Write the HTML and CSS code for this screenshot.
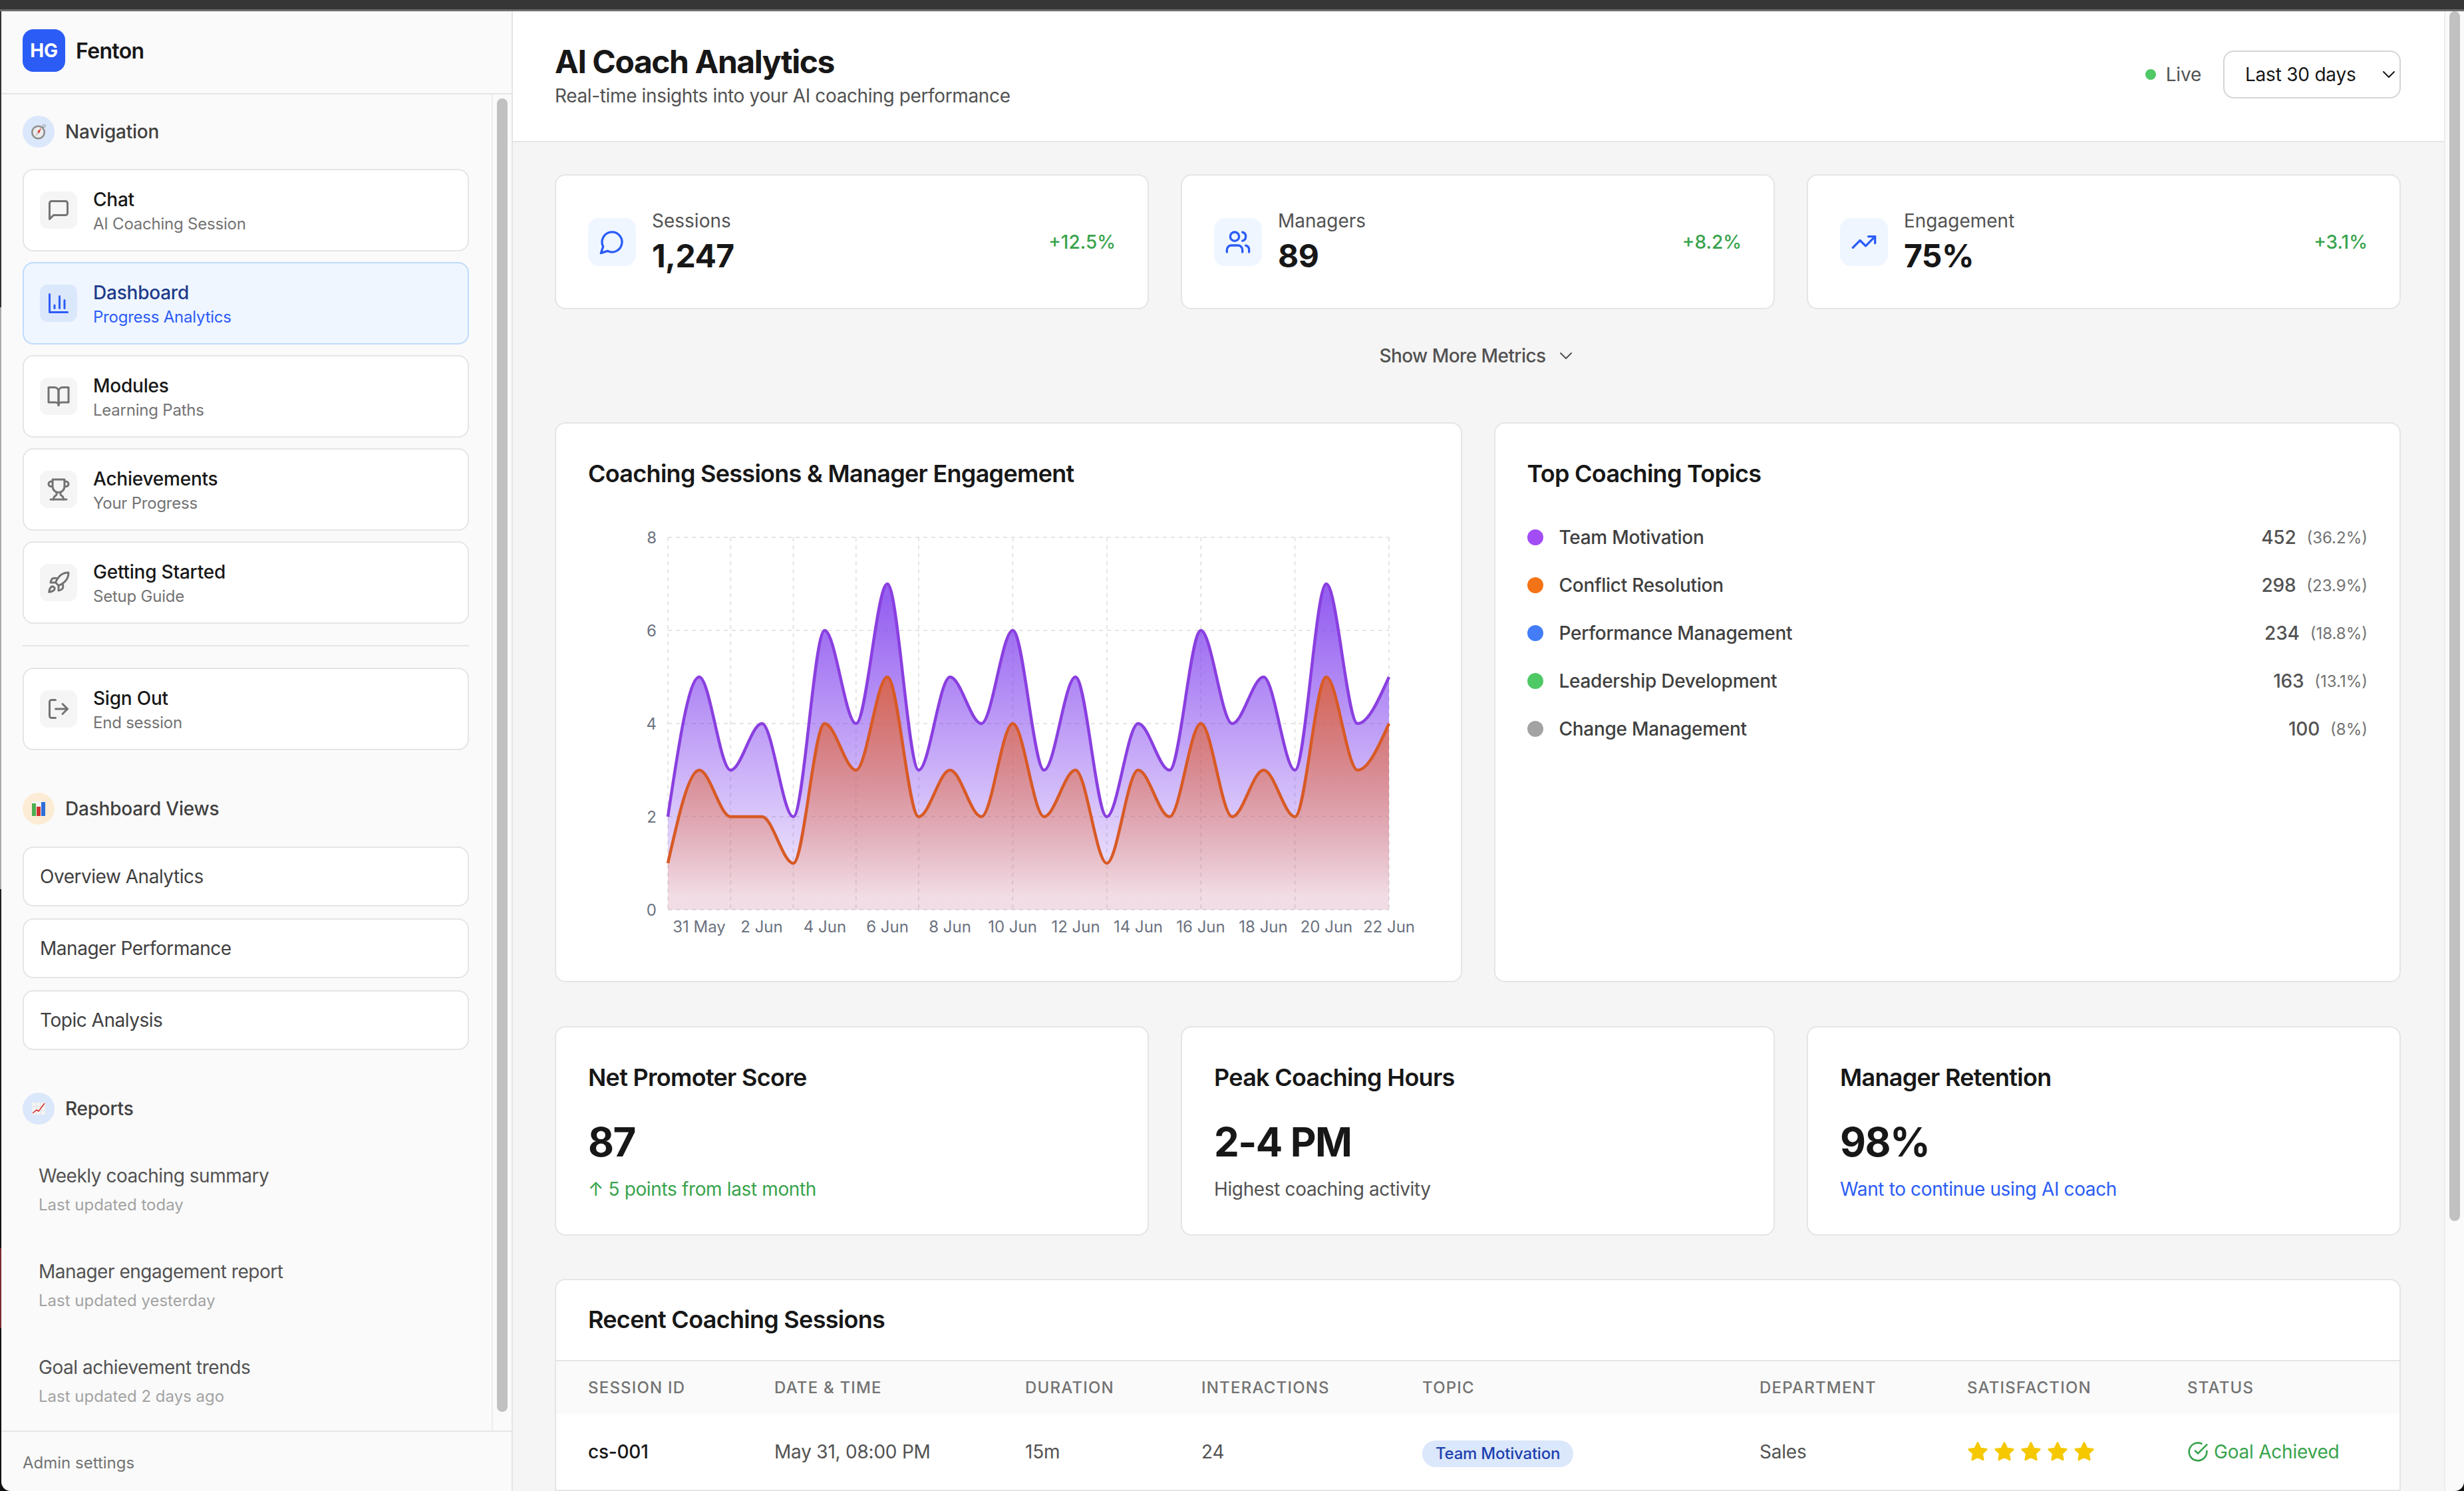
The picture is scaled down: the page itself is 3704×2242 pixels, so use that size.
FILE: index.html
```html
<!DOCTYPE html>
<html lang="en">
  <head>
    <meta charset="UTF-8" />
    <meta name="viewport" content="width=device-width, initial-scale=1.0" />
    <title>AI Coach Analytics</title>
    <link rel="stylesheet" href="styles.css">
  </head>
  <body>
    <svg class="icon-defs">
      <symbol id="i-message-square" viewBox="0 0 24 24"><path d="M21 15a2 2 0 0 1-2 2H7l-4 4V5a2 2 0 0 1 2-2h14a2 2 0 0 1 2 2z" /></symbol>
      <symbol id="i-bar-chart" viewBox="0 0 24 24"><path d="M3 3v18h18" /><path d="M18 17V9" /><path d="M13 17V5" /><path d="M8 17v-3" /></symbol>
      <symbol id="i-book" viewBox="0 0 24 24"><path d="M2 3h6a4 4 0 0 1 4 4v14a3 3 0 0 0-3-3H2z" /><path d="M22 3h-6a4 4 0 0 0-4 4v14a3 3 0 0 1 3-3h7z" /></symbol>
      <symbol id="i-trophy" viewBox="0 0 24 24"><path d="M6 9H4.5a2.5 2.5 0 0 1 0-5H6" /><path d="M18 9h1.5a2.5 2.5 0 0 0 0-5H18" /><path d="M4 22h16" /><path d="M10 14.66V17c0 .55-.47.98-.97 1.21C7.85 18.75 7 20.24 7 22" /><path d="M14 14.66V17c0 .55.47.98.97 1.21C16.15 18.75 17 20.24 17 22" /><path d="M18 2H6v7a6 6 0 0 0 12 0V2Z" /></symbol>
      <symbol id="i-rocket" viewBox="0 0 24 24"><path d="M4.5 16.5c-1.5 1.26-2 5-2 5s3.74-.5 5-2c.71-.84.7-2.13-.09-2.91a2.18 2.18 0 0 0-2.91-.09z" /><path d="m12 15-3-3a22 22 0 0 1 2-3.95A12.88 12.88 0 0 1 22 2c0 2.72-.78 7.5-6 11a22.35 22.35 0 0 1-4 2z" /><path d="M9 12H4s.55-3.03 2-4c1.62-1.08 5 0 5 0" /><path d="M12 15v5s3.03-.55 4-2c1.08-1.62 0-5 0-5" /></symbol>
      <symbol id="i-log-out" viewBox="0 0 24 24"><path d="M9 21H5a2 2 0 0 1-2-2V5a2 2 0 0 1 2-2h4" /><path d="m16 17 5-5-5-5" /><path d="M21 12H9" /></symbol>
      <symbol id="i-message-circle" viewBox="0 0 24 24"><path d="M7.9 20A9 9 0 1 0 4 16.1L2 22Z" /></symbol>
      <symbol id="i-users" viewBox="0 0 24 24"><path d="M16 21v-2a4 4 0 0 0-4-4H6a4 4 0 0 0-4 4v2" /><circle cx="9" cy="7" r="4" /><path d="M22 21v-2a4 4 0 0 0-3-3.87" /><path d="M16 3.13a4 4 0 0 1 0 7.75" /></symbol>
      <symbol id="i-trending-up" viewBox="0 0 24 24"><path d="m22 7-8.5 8.5-5-5L2 17" /><path d="M16 7h6v6" /></symbol>
      <symbol id="i-chevron-down" viewBox="0 0 24 24"><path d="m6 9 6 6 6-6" /></symbol>
      <symbol id="i-check-circle" viewBox="0 0 24 24"><path d="M22 11.08V12a10 10 0 1 1-5.93-9.14" /><path d="m9 11 3 3L22 4" /></symbol>
      <symbol id="i-star" viewBox="0 0 24 24"><path d="M12 2l3.09 6.26L22 9.27l-5 4.87 1.18 6.88L12 17.77l-6.18 3.25L7 14.14 2 9.27l6.91-1.01z" /></symbol>
    </svg>

    <div class="titlebar"></div>
    <div class="app">
      <div class="desk-edge"></div>

      <aside class="sidebar">
        <div class="brand">
          <div class="brand-logo">HG</div>
          <span class="brand-name">Fenton</span>
        </div>

        <div class="sidebar-body">
          <nav class="sidebar-nav">
            <div class="section-head">
              <span class="section-badge badge-blue">
                <svg class="emoji" viewBox="0 0 24 24">
                  <circle cx="11.5" cy="13" r="10.5" fill="#8c8c8c" />
                  <circle cx="11.5" cy="13" r="8" fill="#ececec" />
                  <circle cx="20" cy="3.5" r="2" fill="none" stroke="#9a9a9a" stroke-width="1.2" />
                  <path d="M16 6.5 10 12l3 2.5z" fill="#e0352b" />
                  <path d="M7 19.5 10 12l3 2.5z" fill="#c9c9c9" />
                </svg>
              </span>
              <span class="section-title">Navigation</span>
            </div>

            <div class="nav-list">
              <a class="nav-card">
                <span class="nav-icon"><svg class="icon"><use href="#i-message-square" /></svg></span>
                <span class="nav-text"><span class="nav-title">Chat</span><span class="nav-sub">AI Coaching Session</span></span>
              </a>
              <a class="nav-card active">
                <span class="nav-icon"><svg class="icon"><use href="#i-bar-chart" /></svg></span>
                <span class="nav-text"><span class="nav-title">Dashboard</span><span class="nav-sub">Progress Analytics</span></span>
              </a>
              <a class="nav-card">
                <span class="nav-icon"><svg class="icon"><use href="#i-book" /></svg></span>
                <span class="nav-text"><span class="nav-title">Modules</span><span class="nav-sub">Learning Paths</span></span>
              </a>
              <a class="nav-card">
                <span class="nav-icon"><svg class="icon"><use href="#i-trophy" /></svg></span>
                <span class="nav-text"><span class="nav-title">Achievements</span><span class="nav-sub">Your Progress</span></span>
              </a>
              <a class="nav-card">
                <span class="nav-icon"><svg class="icon"><use href="#i-rocket" /></svg></span>
                <span class="nav-text"><span class="nav-title">Getting Started</span><span class="nav-sub">Setup Guide</span></span>
              </a>
            </div>

            <hr class="nav-divider" />

            <a class="nav-card">
              <span class="nav-icon"><svg class="icon"><use href="#i-log-out" /></svg></span>
              <span class="nav-text"><span class="nav-title">Sign Out</span><span class="nav-sub">End session</span></span>
            </a>

            <div class="section-head section-spaced">
              <span class="section-badge badge-orange">
                <svg class="emoji emoji-small" viewBox="0 0 20 22">
                  <rect width="20" height="22" fill="#f4f4f4" />
                  <rect y="3" width="6" height="19" fill="#4caf50" />
                  <rect x="7" y="8" width="6" height="14" fill="#d32f2f" />
                  <rect x="14" y="1" width="6" height="21" fill="#2f6fd8" />
                </svg>
              </span>
              <span class="section-title">Dashboard Views</span>
            </div>
            <div class="view-list">
              <a class="view-item">Overview Analytics</a>
              <a class="view-item">Manager Performance</a>
              <a class="view-item">Topic Analysis</a>
            </div>

            <div class="section-head section-spaced">
              <span class="section-badge badge-blue">
                <svg class="emoji emoji-small" viewBox="0 0 20 22">
                  <rect y="2" width="20" height="18" fill="#f4f4f4" />
                  <path d="M0 8h20M0 14h20M7 2v18M13 2v18" stroke="#dcdcdc" stroke-width="0.8" />
                  <path d="M1 18 7 13l3 2 9-12" fill="none" stroke="#d32f2f" stroke-width="1.6" />
                </svg>
              </span>
              <span class="section-title">Reports</span>
            </div>
            <div class="report-list">
              <a class="report-item"><span class="report-title">Weekly coaching summary</span><span class="report-sub">Last updated today</span></a>
              <a class="report-item"><span class="report-title">Manager engagement report</span><span class="report-sub">Last updated yesterday</span></a>
              <a class="report-item"><span class="report-title">Goal achievement trends</span><span class="report-sub">Last updated 2 days ago</span></a>
            </div>
          </nav>
          <div class="scroll-track sidebar-track"><div class="scroll-thumb"></div></div>
        </div>

        <div class="sidebar-footer">Admin settings</div>
      </aside>

      <main class="main">
        <header class="main-header">
          <div>
            <h1 class="page-title">AI Coach Analytics</h1>
            <p class="page-sub">Real-time insights into your AI coaching performance</p>
          </div>
          <div class="header-actions">
            <span class="live"><span class="live-dot"></span>Live</span>
            <div class="range-select">
              <span>Last 30 days</span>
              <svg class="icon chevron"><use href="#i-chevron-down" /></svg>
            </div>
          </div>
        </header>

        <div class="content">
          <section class="grid-3">
            <div class="card stat-card">
              <span class="stat-icon"><svg class="icon"><use href="#i-message-circle" /></svg></span>
              <div class="stat-text"><div class="stat-label">Sessions</div><div class="stat-value">1,247</div></div>
              <span class="stat-change">+12.5%</span>
            </div>
            <div class="card stat-card">
              <span class="stat-icon"><svg class="icon"><use href="#i-users" /></svg></span>
              <div class="stat-text"><div class="stat-label">Managers</div><div class="stat-value">89</div></div>
              <span class="stat-change">+8.2%</span>
            </div>
            <div class="card stat-card">
              <span class="stat-icon"><svg class="icon"><use href="#i-trending-up" /></svg></span>
              <div class="stat-text"><div class="stat-label">Engagement</div><div class="stat-value">75%</div></div>
              <span class="stat-change">+3.1%</span>
            </div>
          </section>

          <div class="show-more">
            <span>Show More Metrics</span>
            <svg class="icon chevron"><use href="#i-chevron-down" /></svg>
          </div>

          <section class="grid-2">
            <div class="card panel">
              <h2 class="card-title">Coaching Sessions &amp; Manager Engagement</h2>
              <svg class="chart" width="1260" height="658" viewBox="0 0 1260 658">
                <defs>
                  <linearGradient id="fill-purple" x1="0" y1="0" x2="0" y2="1">
                    <stop offset="5%" stop-color="#7c3aed" stop-opacity="0.8" />
                    <stop offset="95%" stop-color="#7c3aed" stop-opacity="0.1" />
                  </linearGradient>
                  <linearGradient id="fill-orange" x1="0" y1="0" x2="0" y2="1">
                    <stop offset="5%" stop-color="#ea580c" stop-opacity="0.65" />
                    <stop offset="95%" stop-color="#ea580c" stop-opacity="0.1" />
                  </linearGradient>
                </defs>
                <!-- plot area: 3 units per day across, 1 unit per session down -->
                <svg class="plot" x="120" y="39" width="1084" height="560" viewBox="0 0 69 8" preserveAspectRatio="none">
                  <path class="grid-line" d="M0 0H69M0 2H69M0 4H69M0 6H69M0 8H69M0 0V8M6 0V8M12 0V8M18 0V8M24 0V8M33 0V8M42 0V8M51 0V8M60 0V8M69 0V8" />
                  <path fill="url(#fill-purple)" d="M0 6C1 4.5 2 3 3 3S5 5 6 5S8 4 9 4S11 6 12 6S14 2 15 2S17 4 18 4S20 1 21 1S23 5 24 5S26 3 27 3S29 4 30 4S32 2 33 2S35 5 36 5S38 3 39 3S41 6 42 6S44 4 45 4S47 5 48 5S50 2 51 2S53 4 54 4S56 3 57 3S59 5 60 5S62 1 63 1S65 4 66 4S68 3.5 69 3V8H0Z" />
                  <path class="line line-purple" d="M0 6C1 4.5 2 3 3 3S5 5 6 5S8 4 9 4S11 6 12 6S14 2 15 2S17 4 18 4S20 1 21 1S23 5 24 5S26 3 27 3S29 4 30 4S32 2 33 2S35 5 36 5S38 3 39 3S41 6 42 6S44 4 45 4S47 5 48 5S50 2 51 2S53 4 54 4S56 3 57 3S59 5 60 5S62 1 63 1S65 4 66 4S68 3.5 69 3" />
                  <path fill="url(#fill-orange)" d="M0 7C1 6 2 5 3 5S5 6 6 6S8 6 9 6S11 7 12 7S14 4 15 4S17 5 18 5S20 3 21 3S23 6 24 6S26 5 27 5S29 6 30 6S32 4 33 4S35 6 36 6S38 5 39 5S41 7 42 7S44 5 45 5S47 6 48 6S50 4 51 4S53 6 54 6S56 5 57 5S59 6 60 6S62 3 63 3S65 5 66 5S68 4.5 69 4V8H0Z" />
                  <path class="line line-orange" d="M0 7C1 6 2 5 3 5S5 6 6 6S8 6 9 6S11 7 12 7S14 4 15 4S17 5 18 5S20 3 21 3S23 6 24 6S26 5 27 5S29 6 30 6S32 4 33 4S35 6 36 6S38 5 39 5S41 7 42 7S44 5 45 5S47 6 48 6S50 4 51 4S53 6 54 6S56 5 57 5S59 6 60 6S62 3 63 3S65 5 66 5S68 4.5 69 4" />
                </svg>
                <g class="axis axis-y">
                  <text x="103" y="39">8</text>
                  <text x="103" y="179">6</text>
                  <text x="103" y="319">4</text>
                  <text x="103" y="459">2</text>
                  <text x="103" y="599">0</text>
                </g>
                <g class="axis axis-x">
                  <text x="167" y="624">31 May</text>
                  <text x="261" y="624">2 Jun</text>
                  <text x="356" y="624">4 Jun</text>
                  <text x="450" y="624">6 Jun</text>
                  <text x="544" y="624">8 Jun</text>
                  <text x="638" y="624">10 Jun</text>
                  <text x="733" y="624">12 Jun</text>
                  <text x="827" y="624">14 Jun</text>
                  <text x="921" y="624">16 Jun</text>
                  <text x="1015" y="624">18 Jun</text>
                  <text x="1110" y="624">20 Jun</text>
                  <text x="1204" y="624">22 Jun</text>
                </g>
              </svg>
            </div>

            <div class="card panel">
              <h2 class="card-title">Top Coaching Topics</h2>
              <ul class="topic-list">
                <li class="topic-row"><span class="dot dot-purple"></span><span class="topic-name">Team Motivation</span><span class="topic-count">452</span><span class="topic-pct">(36.2%)</span></li>
                <li class="topic-row"><span class="dot dot-orange"></span><span class="topic-name">Conflict Resolution</span><span class="topic-count">298</span><span class="topic-pct">(23.9%)</span></li>
                <li class="topic-row"><span class="dot dot-blue"></span><span class="topic-name">Performance Management</span><span class="topic-count">234</span><span class="topic-pct">(18.8%)</span></li>
                <li class="topic-row"><span class="dot dot-green"></span><span class="topic-name">Leadership Development</span><span class="topic-count">163</span><span class="topic-pct">(13.1%)</span></li>
                <li class="topic-row"><span class="dot dot-gray"></span><span class="topic-name">Change Management</span><span class="topic-count">100</span><span class="topic-pct">(8%)</span></li>
              </ul>
            </div>
          </section>

          <section class="grid-3 spaced">
            <div class="card panel">
              <h3 class="card-title">Net Promoter Score</h3>
              <div class="big-value">87</div>
              <div class="big-note green">↑ 5 points from last month</div>
            </div>
            <div class="card panel">
              <h3 class="card-title">Peak Coaching Hours</h3>
              <div class="big-value">2-4 PM</div>
              <div class="big-note">Highest coaching activity</div>
            </div>
            <div class="card panel">
              <h3 class="card-title">Manager Retention</h3>
              <div class="big-value">98%</div>
              <div class="big-note blue">Want to continue using AI coach</div>
            </div>
          </section>

          <section class="card table-card">
            <h2 class="card-title table-title">Recent Coaching Sessions</h2>
            <table class="sessions">
              <colgroup>
                <col class="col-id" /><col class="col-date" /><col class="col-duration" /><col class="col-interactions" />
                <col class="col-topic" /><col class="col-dept" /><col class="col-rating" /><col class="col-status" />
              </colgroup>
              <thead>
                <tr>
                  <th>Session ID</th><th>Date &amp; Time</th><th>Duration</th><th>Interactions</th>
                  <th>Topic</th><th>Department</th><th>Satisfaction</th><th>Status</th>
                </tr>
              </thead>
              <tbody>
                <tr>
                  <td class="session-id">cs-001</td>
                  <td>May 31, 08:00 PM</td>
                  <td>15m</td>
                  <td>24</td>
                  <td><span class="chip">Team Motivation</span></td>
                  <td>Sales</td>
                  <td>
                    <span class="stars">
                      <svg class="icon star"><use href="#i-star" /></svg>
                      <svg class="icon star"><use href="#i-star" /></svg>
                      <svg class="icon star"><use href="#i-star" /></svg>
                      <svg class="icon star"><use href="#i-star" /></svg>
                      <svg class="icon star"><use href="#i-star" /></svg>
                    </span>
                  </td>
                  <td>
                    <span class="status green"><svg class="icon status-icon"><use href="#i-check-circle" /></svg>Goal Achieved</span>
                  </td>
                </tr>
              </tbody>
            </table>
          </section>
        </div>
      </main>

      <div class="scroll-track page-track"><div class="scroll-thumb"></div></div>
    </div>
  </body>
</html>
```

FILE: styles.css
```css
* {
  box-sizing: border-box;
}
html,
body {
  margin: 0;
  height: 2242px;
  overflow: hidden;
}
body {
  font-family: Inter, "Liberation Sans", sans-serif;
  font-size: 28px;
  letter-spacing: -0.008em;
  color: #171717;
  background-color: #111;
}
h1,
h2,
h3,
p,
ul {
  margin: 0;
  padding: 0;
}
.icon-defs {
  display: none;
}
.icon {
  width: 36px;
  height: 36px;
  fill: none;
  stroke: currentColor;
  stroke-width: 2;
  stroke-linecap: round;
  stroke-linejoin: round;
  flex-shrink: 0;
}
.titlebar {
  height: 17px;
  background-color: #363636;
  border-bottom: 3px solid #6e6e6e;
}
.app {
  display: flex;
  height: 2225px;
}
.desk-edge {
  width: 2px;
  flex-shrink: 0;
  background: linear-gradient(#333 0, #333 445px, #aaa 445px, #aaa 1320px, #222 1320px, #111 1860px, #7a2a30 1860px, #7a2a30 1980px, #111 1980px);
}

/* sidebar */
.sidebar {
  width: 769px;
  flex-shrink: 0;
  display: flex;
  flex-direction: column;
  background-color: #fafafa;
  border-right: 2px solid #e5e5e5;
  border-bottom-left-radius: 14px;
}
.brand {
  display: flex;
  align-items: center;
  gap: 16px;
  height: 125px;
  padding: 0 32px 5px;
  border-bottom: 2px solid #e5e5e5;
}
.brand-logo {
  width: 64px;
  height: 64px;
  border-radius: 16px;
  background-color: #2b5cf6;
  color: #fff;
  font-size: 28px;
  font-weight: 700;
  display: flex;
  align-items: center;
  justify-content: center;
}
.brand-name {
  font-size: 32px;
  font-weight: 600;
  letter-spacing: -0.02em;
}
.sidebar-body {
  flex: 1;
  min-height: 0;
  display: flex;
}
.sidebar-nav {
  flex: 1;
  min-width: 0;
  padding: 32px 34px 0 32px;
  overflow: hidden;
}
.section-head {
  display: flex;
  align-items: center;
  gap: 16px;
  height: 48px;
  margin-bottom: 32px;
}
.section-spaced {
  margin-top: 64px;
  margin-bottom: 33px;
}
.section-badge {
  width: 48px;
  height: 48px;
  border-radius: 50%;
  display: flex;
  align-items: center;
  justify-content: center;
}
.badge-blue {
  background-color: #dbe7fb;
}
.badge-orange {
  background-color: #fdecd5;
}
.emoji {
  width: 24px;
  height: 24px;
}
.emoji-small {
  width: 20px;
  height: 22px;
}
.section-title {
  font-size: 28px;
  font-weight: 500;
  color: #404040;
}
.nav-list {
  display: flex;
  flex-direction: column;
  gap: 16px;
}
.nav-card {
  display: flex;
  align-items: center;
  gap: 24px;
  height: 124px;
  padding: 0 24px;
  background-color: #fff;
  border: 2px solid #e5e5e5;
  border-radius: 16px;
}
.nav-icon {
  width: 56px;
  height: 56px;
  border-radius: 12px;
  background-color: #f5f5f5;
  color: #737373;
  display: flex;
  align-items: center;
  justify-content: center;
}
.nav-text {
  display: flex;
  flex-direction: column;
  padding-top: 2px;
}
.nav-title {
  font-size: 28px;
  line-height: 40px;
  font-weight: 500;
}
.nav-sub {
  font-size: 24px;
  line-height: 34px;
  color: #737373;
}
.nav-card.active {
  background-color: #eff6ff;
  border-color: #bfdbfe;
}
.active .nav-icon {
  background-color: #dbe7fb;
  color: #2b5cf6;
}
.active .nav-title {
  color: #1e3a8a;
}
.active .nav-sub {
  color: #2b5cf6;
}
.nav-divider {
  height: 2px;
  margin: 32px 0;
  border: 0;
  background-color: #e5e5e5;
}
.view-list {
  display: flex;
  flex-direction: column;
  gap: 18px;
}
.view-item {
  display: flex;
  align-items: center;
  height: 90px;
  padding: 0 24px;
  background-color: #fff;
  border: 2px solid #e5e5e5;
  border-radius: 16px;
  font-size: 28px;
  letter-spacing: -0.017em;
  color: #404040;
}
.report-list {
  display: flex;
  flex-direction: column;
  gap: 16px;
}
.report-item {
  display: flex;
  flex-direction: column;
  padding: 24px 24px;
}
.report-title {
  font-size: 28px;
  line-height: 40px;
  letter-spacing: -0.017em;
  color: #525252;
}
.report-sub {
  margin-top: 8px;
  font-size: 24px;
  line-height: 32px;
  letter-spacing: 0;
  color: #a3a3a3;
}
.sidebar-footer {
  height: 91px;
  padding: 29px 32px 0;
  font-size: 24px;
  line-height: 36px;
  letter-spacing: 0;
  color: #737373;
  border-top: 2px solid #e5e5e5;
}
.scroll-track {
  width: 30px;
  flex-shrink: 0;
  background-color: #fafafa;
  border-left: 2px solid #ececec;
  padding: 6px 6px 0;
}
.scroll-thumb {
  width: 16px;
  border-radius: 8px;
  background-color: #c1c1c1;
}
.sidebar-track .scroll-thumb {
  height: 1975px;
}
.page-track {
  border-bottom-right-radius: 14px;
  padding-top: 0;
}
.page-track .scroll-thumb {
  height: 1819px;
}

/* main */
.main {
  flex: 1;
  min-width: 0;
  overflow: hidden;
  background-color: #f5f5f5;
}
.main-header {
  display: flex;
  justify-content: space-between;
  align-items: flex-start;
  height: 197px;
  padding: 46px 65px 0 63px;
  background-color: #fff;
  border-bottom: 2px solid #e5e5e5;
}
.page-title {
  font-size: 48px;
  line-height: 60px;
  font-weight: 700;
  letter-spacing: -0.03em;
}
.page-sub {
  margin-top: 1px;
  font-size: 28px;
  line-height: 40px;
  letter-spacing: -0.013em;
  color: #525252;
}
.header-actions {
  display: flex;
  align-items: center;
  gap: 33px;
  margin-top: 13px;
}
.live {
  display: flex;
  align-items: center;
  gap: 15px;
  color: #525252;
}
.live-dot {
  width: 16px;
  height: 16px;
  border-radius: 50%;
  background-color: #4fc866;
}
.range-select {
  display: flex;
  align-items: center;
  justify-content: space-between;
  width: 267px;
  height: 72px;
  padding-left: 31px;
  background-color: #fff;
  border: 2px solid #d4d4d4;
  border-radius: 16px;
}
.chevron {
  width: 32px;
  height: 32px;
  stroke-width: 1.5;
}
.content {
  padding: 48px 65px 0 63px;
}
.grid-3 {
  display: grid;
  grid-template-columns: repeat(3, 1fr);
  gap: 48px;
}
.grid-2 {
  display: grid;
  grid-template-columns: repeat(2, 1fr);
  gap: 48px;
}
.spaced {
  margin-top: 66px;
  margin-bottom: 65px;
}
.card {
  background-color: #fff;
  border: 2px solid #e5e5e5;
  border-radius: 16px;
}
.stat-card {
  display: flex;
  align-items: center;
  gap: 24px;
  padding: 48px;
}
.stat-icon {
  width: 72px;
  height: 72px;
  border-radius: 16px;
  background-color: #eff6ff;
  color: #2b5cf6;
  display: flex;
  align-items: center;
  justify-content: center;
}
.stat-icon .icon {
  width: 40px;
  height: 40px;
}
.stat-text {
  flex: 1;
}
.stat-label {
  line-height: 40px;
  margin-bottom: 3px;
  letter-spacing: 0;
  color: #525252;
}
.stat-value {
  font-size: 48px;
  line-height: 60px;
  font-weight: 700;
  letter-spacing: -0.012em;
}
.stat-change {
  font-weight: 500;
  letter-spacing: 0;
  color: #38a34c;
}
.show-more {
  display: flex;
  align-items: center;
  justify-content: center;
  gap: 14px;
  height: 40px;
  margin: 50px 0 80px;
  font-weight: 500;
  letter-spacing: -0.02em;
  color: #525252;
}
.panel {
  padding: 48px;
}
.card-title {
  padding-top: 1px;
  font-size: 36px;
  line-height: 52px;
  font-weight: 600;
  letter-spacing: -0.02em;
}

/* chart */
.chart {
  display: block;
  margin-top: 31px;
}
.plot {
  overflow: visible;
}
.grid-line {
  fill: none;
  stroke: #e5e5e5;
  stroke-width: 2;
  stroke-dasharray: 6 6;
  vector-effect: non-scaling-stroke;
}
.line {
  fill: none;
  stroke-width: 4.5;
  vector-effect: non-scaling-stroke;
}
.line-purple {
  stroke: #8a3fe0;
}
.line-orange {
  stroke: #d85a25;
}
.axis text {
  font-size: 24px;
  letter-spacing: 0;
  fill: #6b7280;
  dominant-baseline: central;
}
.axis-y text {
  text-anchor: end;
}
.axis-x text {
  text-anchor: middle;
}

/* topics */
.topic-list {
  list-style: none;
  margin-top: 50px;
  display: flex;
  flex-direction: column;
  gap: 32px;
}
.topic-row {
  display: flex;
  align-items: center;
  height: 40px;
}
.dot {
  width: 24px;
  height: 24px;
  border-radius: 50%;
  margin-right: 24px;
}
.dot-purple {
  background-color: #a24cf6;
}
.dot-orange {
  background-color: #f47316;
}
.dot-blue {
  background-color: #437cf7;
}
.dot-green {
  background-color: #4fc866;
}
.dot-gray {
  background-color: #a3a3a3;
}
.topic-name {
  flex: 1;
  font-weight: 500;
  letter-spacing: -0.01em;
  color: #404040;
}
.topic-count {
  font-weight: 500;
  color: #525252;
}
.topic-pct {
  margin-left: 16px;
  font-size: 24px;
  letter-spacing: 0;
  color: #737373;
}

/* highlights */
.big-value {
  margin-top: 35px;
  font-size: 60px;
  line-height: 72px;
  font-weight: 700;
  letter-spacing: -0.025em;
}
.big-note {
  margin-top: 15px;
  line-height: 40px;
  letter-spacing: -0.013em;
  color: #525252;
}
.big-note.green,
.green {
  color: #38a34c;
}
.big-note.blue {
  color: #2b5cf6;
}

/* sessions table */
.table-card {
  min-height: 500px;
}
.table-title {
  padding: 33px 48px 35px;
  border-bottom: 2px solid #e5e5e5;
}
.sessions {
  width: 2771px;
  table-layout: fixed;
  border-collapse: collapse;
}
.col-id { width: 280px; }
.col-date { width: 377px; }
.col-duration { width: 265px; }
.col-interactions { width: 332px; }
.col-topic { width: 507px; }
.col-dept { width: 312px; }
.col-rating { width: 331px; }
.col-status { width: 367px; }
.sessions th {
  height: 79px;
  padding: 0 0 0 48px;
  background-color: #fafafa;
  text-align: left;
  font-size: 24px;
  font-weight: 500;
  letter-spacing: 0.05em;
  text-transform: uppercase;
  color: #737373;
}
.sessions td {
  height: 115px;
  padding: 0 0 0 48px;
  color: #525252;
  border-bottom: 2px solid #e5e5e5;
}
.sessions .session-id {
  font-weight: 500;
  color: #171717;
}
.chip {
  display: inline-block;
  position: relative;
  top: 3px;
  height: 40px;
  padding: 0 20px;
  border-radius: 20px;
  background-color: #dbe7fb;
  color: #1e40af;
  font-size: 24px;
  line-height: 40px;
  font-weight: 500;
}
.stars {
  display: flex;
  gap: 8px;
}
.star {
  width: 32px;
  height: 32px;
  fill: #f5c800;
  stroke: #f5c800;
}
.sessions .status {
  display: flex;
  align-items: center;
  gap: 8px;
  color: #38a34c;
}
.status-icon {
  width: 32px;
  height: 32px;
}
```
